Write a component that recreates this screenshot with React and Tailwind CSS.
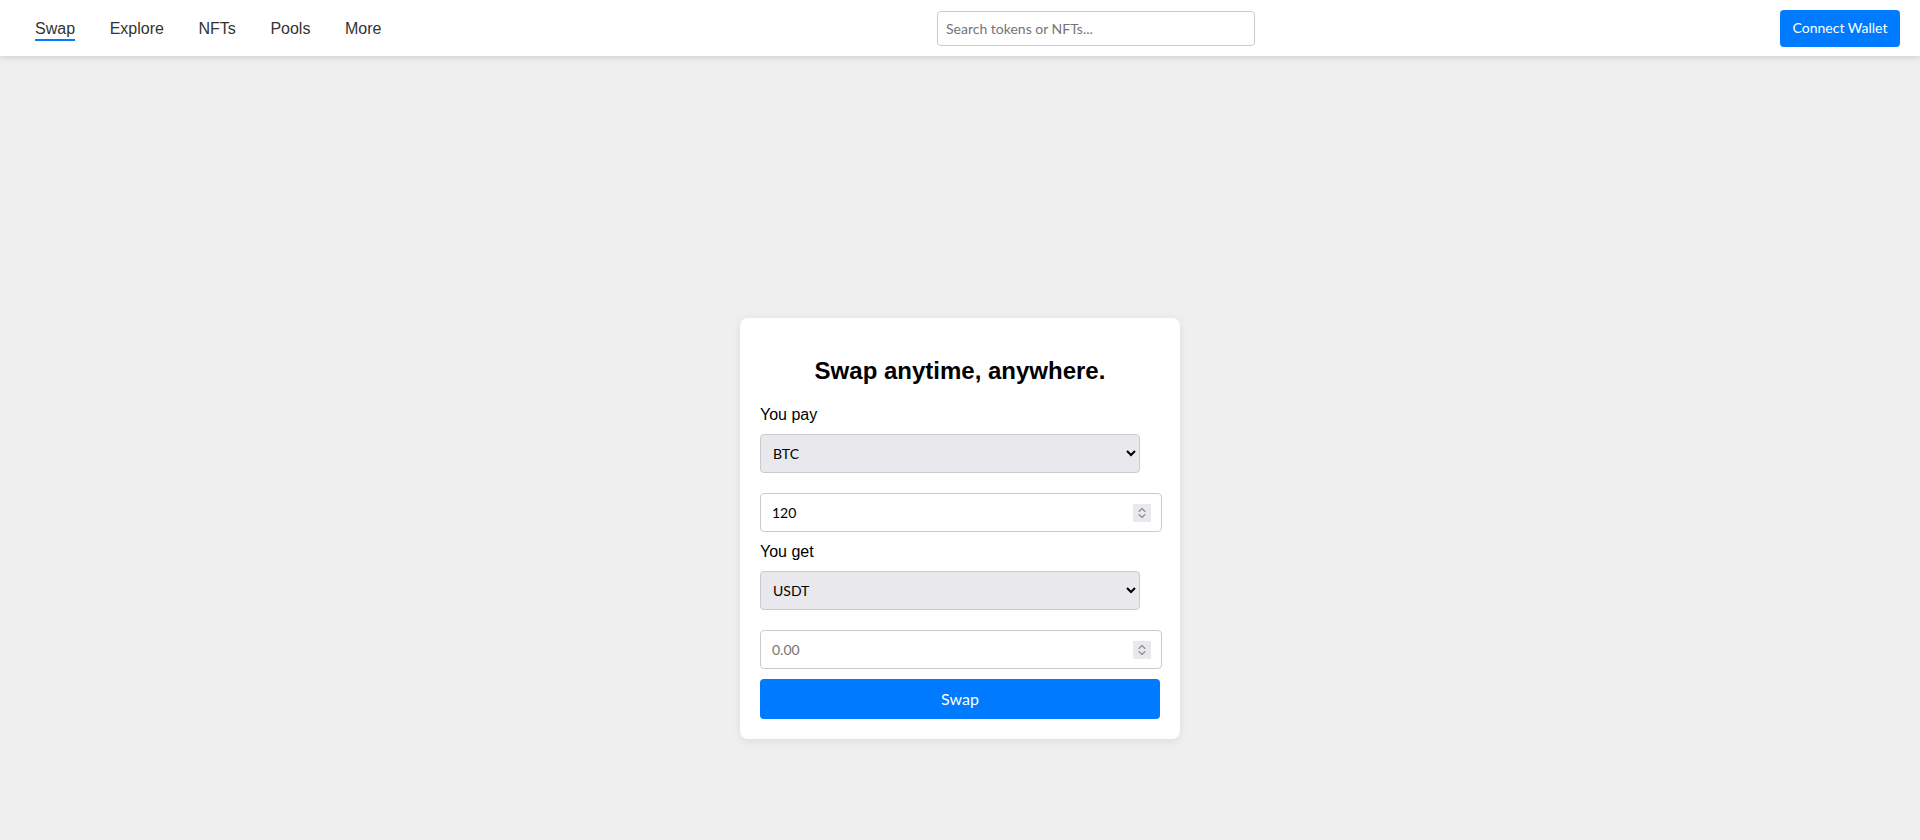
import { useState } from 'react'

const LINKS = ['Swap', 'Explore', 'NFTs', 'Pools', 'More']

function Spinner() {
  return (
    <div className="absolute right-[11px] top-1/2 -translate-y-1/2 w-[18px] h-[18px] bg-[#e9e9ed] pointer-events-none">
      <svg width="18" height="18" viewBox="0 0 18 18" fill="none" stroke="#8c8c8c" strokeWidth="1.1" strokeLinecap="round" strokeLinejoin="round">
        <path d="M6 7.5 L9 4.5 L12 7.5" />
        <path d="M6 10.5 L9 13.5 L12 10.5" />
      </svg>
    </div>
  )
}

function NumberField({ value, onChange, placeholder }) {
  return (
    <div className="relative mt-5 w-[402px] h-[39px]">
      <input type="number" value={value} onChange={onChange} placeholder={placeholder} readOnly={!onChange}
        className="w-full h-full border border-[#cbcbcb] rounded pl-[11px] pr-10 text-sm text-black placeholder:text-[#757575] outline-none [appearance:textfield] [&::-webkit-inner-spin-button]:appearance-none [&::-webkit-outer-spin-button]:appearance-none" />
      <Spinner />
    </div>
  )
}

export default function App() {
  const [active, setActive] = useState('Swap')
  const [pay, setPay] = useState('BTC')
  const [get, setGet] = useState('USDT')
  const [amount, setAmount] = useState('120')

  return (
    <div className="min-h-[840px] bg-[#efefef]" style={{ fontFamily: 'Lato, sans-serif' }}>
      {/* Header */}
      <nav className="h-14 bg-white flex items-center px-5 shadow-[0_2px_6px_rgba(0,0,0,0.12)] relative">
        <div className="flex items-center gap-[34.6px] pl-[15px] mt-[2px]" style={{ fontFamily: '"Liberation Sans", Arial, sans-serif' }}>
          {LINKS.map(link => (
            <button key={link} onClick={() => setActive(link)}
              className={`text-base leading-[18px] text-[#333] pt-[2px] pb-[1px] border-b-2 ${active === link ? 'border-[#007bff]' : 'border-transparent'}`}>
              {link}
            </button>
          ))}
        </div>
        <input placeholder="Search tokens or NFTs..."
          className="ml-auto w-[318px] h-[35px] border border-[#cccccc] rounded px-2 text-sm text-[#333] placeholder:text-[#757575] outline-none" />
        <button className="ml-[525px] w-[120px] h-[37px] bg-[#007bff] text-white text-sm rounded">
          Connect Wallet
        </button>
      </nav>

      {/* Swap card */}
      <div className="flex justify-center pt-[262px]">
        <div className="w-[440px] bg-white rounded-lg px-5 pb-5 pt-[39px] flex flex-col shadow-[0_2px_8px_rgba(0,0,0,0.08)]">
          <h2 className="text-2xl leading-7 font-bold text-black text-center" style={{ fontFamily: '"Liberation Sans", Arial, sans-serif' }}>
            Swap anytime, anywhere.
          </h2>
          <label className="mt-[21px] text-base leading-[18px] text-black" style={{ fontFamily: '"Liberation Sans", Arial, sans-serif' }}>You pay</label>
          <select value={pay} onChange={e => setPay(e.target.value)}
            className="mt-[10px] w-[380px] h-[39px] bg-[#e9e9ed] border border-[#cbcbcb] rounded px-[8px] text-sm text-black">
            <option>BTC</option>
            <option>ETH</option>
            <option>USDT</option>
          </select>
          <NumberField value={amount} onChange={e => setAmount(e.target.value)} />
          <label className="mt-[11px] text-base leading-[18px] text-black" style={{ fontFamily: '"Liberation Sans", Arial, sans-serif' }}>You get</label>
          <select value={get} onChange={e => setGet(e.target.value)}
            className="mt-[10px] w-[380px] h-[39px] bg-[#e9e9ed] border border-[#cbcbcb] rounded px-[8px] text-sm text-black">
            <option>USDT</option>
            <option>BTC</option>
            <option>ETH</option>
          </select>
          <NumberField placeholder="0.00" />
          <button className="mt-[10px] w-[400px] h-10 bg-[#007bff] text-white text-base rounded">
            Swap
          </button>
        </div>
      </div>
    </div>
  )
}
